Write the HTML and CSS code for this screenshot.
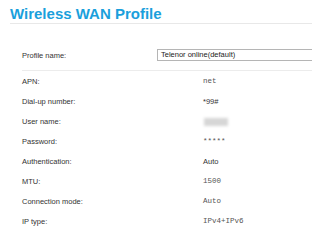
FILE: index.html
```html
<!DOCTYPE html>
<html lang="en">
<head>
    <meta charset="UTF-8">
    <title>Wireless WAN Profile</title>
    <link rel="stylesheet" href="styles.css">
</head>
<body>
    <h1 class="page-title">Wireless WAN Profile</h1>

    <div class="profile-form">
        <div class="row row-select">
            <div class="label">Profile name:</div>
            <div class="select-box">Telenor online(default)</div>
        </div>
        <div class="divider"></div>
        <div class="row">
            <div class="label">APN:</div>
            <div class="value mono">net</div>
        </div>
        <div class="row">
            <div class="label">Dial-up number:</div>
            <div class="value">*99#</div>
        </div>
        <div class="row">
            <div class="label">User name:</div>
            <div class="value"><span class="blurred"></span></div>
        </div>
        <div class="row">
            <div class="label">Password:</div>
            <div class="value mono">*****</div>
        </div>
        <div class="row">
            <div class="label">Authentication:</div>
            <div class="value">Auto</div>
        </div>
        <div class="row">
            <div class="label">MTU:</div>
            <div class="value mono">1500</div>
        </div>
        <div class="row">
            <div class="label">Connection mode:</div>
            <div class="value mono">Auto</div>
        </div>
        <div class="row">
            <div class="label">IP type:</div>
            <div class="value mono">IPv4+IPv6</div>
        </div>
    </div>
</body>
</html>
```

FILE: styles.css
```css
body {
    margin: 0;
    background-color: #fff;
    font-family: 'Liberation Sans', Arial, sans-serif;
    color: #333;
    overflow: hidden;
}

.page-title {
    margin: 5px 0 0 10px;
    padding-bottom: 1px;
    font-size: 15px;
    line-height: 17px;
    font-weight: bold;
    color: #1aa0dc;
    border-bottom: 1px solid #e8e8e8;
}

.profile-form {
    margin-top: 21px;
    padding-left: 22px;
}

.row {
    display: grid;
    grid-template-columns: 135px 1fr;
    height: 20px;
    align-items: center;
    font-size: 7.5px;
}

.row-select {
    margin-bottom: 5px;
}

.select-box {
    height: 10px;
    line-height: 10px;
    padding-left: 3px;
    border: 1px solid #b5b5b5;
    border-right: none;
    color: #222;
    white-space: nowrap;
}

.divider {
    height: 1px;
    background-color: #ececec;
}

.value {
    padding-left: 46px;
    color: #333;
}

.value.mono {
    font-family: 'Liberation Mono', 'Courier New', monospace;
    color: #555;
}

.blurred {
    display: inline-block;
    width: 24px;
    height: 8px;
    margin-left: 1px;
    background-color: #d6d6d6;
    filter: blur(1.5px);
    vertical-align: middle;
}
```
